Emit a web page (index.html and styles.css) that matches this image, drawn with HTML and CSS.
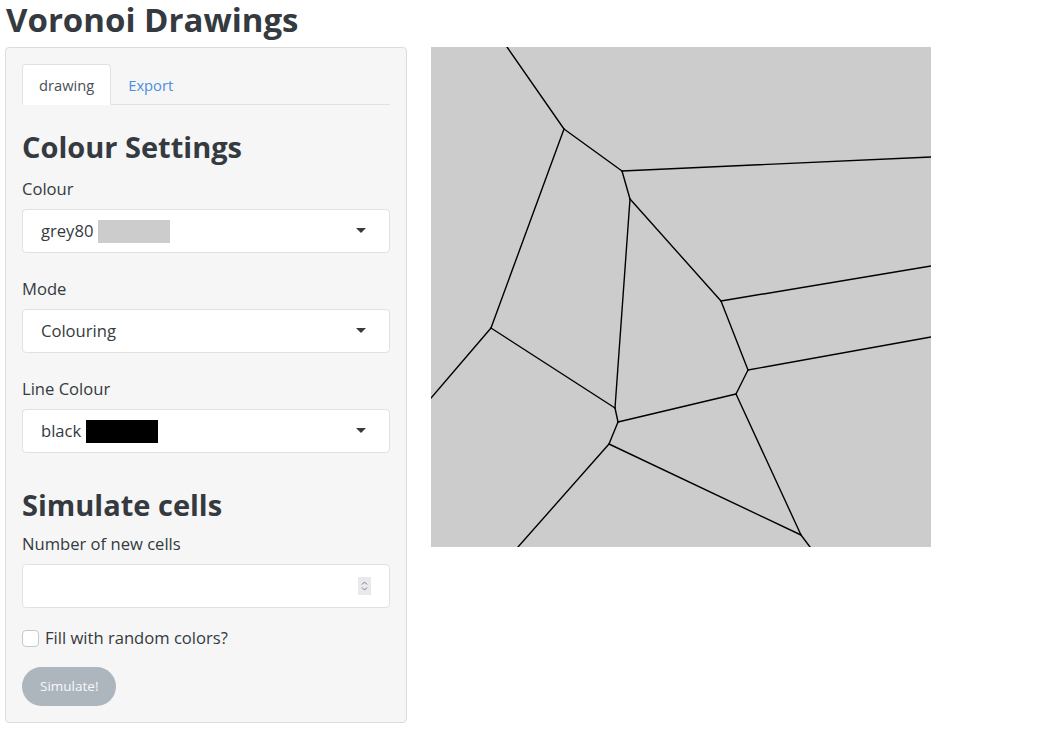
FILE: index.html
```html
<!DOCTYPE html>
<html lang="en">
<head>
<meta charset="utf-8">
<title>Voronoi Drawings</title>
<link rel="stylesheet" href="styles.css">
</head>
<body>
<div class="page">
  <h1 class="title">Voronoi Drawings</h1>
  <div class="row">
    <div class="well">
      <div class="nav">
        <div class="tab active">drawing</div>
        <div class="tab link">Export</div>
      </div>
      <div class="pane">
        <h3 class="heading first">Colour Settings</h3>
        <div class="field">
          <div class="label">Colour</div>
          <div class="select"><span class="value">grey80 <span class="swatch grey"></span></span><span class="caret"></span></div>
        </div>
        <div class="field">
          <div class="label">Mode</div>
          <div class="select"><span class="value">Colouring</span><span class="caret"></span></div>
        </div>
        <div class="field">
          <div class="label">Line Colour</div>
          <div class="select"><span class="value">black <span class="swatch black"></span></span><span class="caret"></span></div>
        </div>
        <h3 class="heading second">Simulate cells</h3>
        <div class="field small">
          <div class="label">Number of new cells</div>
          <div class="input">
            <span class="spinner">
              <svg width="13" height="18" viewBox="0 0 13 18"><path d="M4 7.5 L6.5 5 L9 7.5" fill="none" stroke="#7d7d82" stroke-width="1"/><path d="M4 10.5 L6.5 13 L9 10.5" fill="none" stroke="#7d7d82" stroke-width="1"/></svg>
            </span>
          </div>
        </div>
        <label class="check"><input type="checkbox" class="box"><span>Fill with random colors?</span></label>
        <div class="btn">Simulate!</div>
      </div>
    </div>
    <div class="plot">
      <svg width="500" height="500" viewBox="0 0 500 500">
        <rect width="500" height="500" fill="#cccccc"/>
        <g stroke="#000" stroke-width="1.4" fill="none" stroke-linecap="round">
          <line x1="76" y1="0" x2="133" y2="82"/>
          <line x1="133" y1="82" x2="191" y2="124"/>
          <line x1="191" y1="124" x2="500" y2="110"/>
          <line x1="191" y1="124" x2="199" y2="152"/>
          <line x1="199" y1="152" x2="184" y2="361"/>
          <line x1="199" y1="152" x2="290" y2="254"/>
          <line x1="290" y1="254" x2="500" y2="219"/>
          <line x1="133" y1="82" x2="60" y2="281"/>
          <line x1="60" y1="281" x2="0" y2="351"/>
          <line x1="60" y1="281" x2="184" y2="361"/>
          <line x1="184" y1="361" x2="187" y2="375"/>
          <line x1="187" y1="375" x2="178" y2="397"/>
          <line x1="187" y1="375" x2="305" y2="347"/>
          <line x1="305" y1="347" x2="317" y2="323"/>
          <line x1="317" y1="323" x2="290" y2="254"/>
          <line x1="317" y1="323" x2="500" y2="290"/>
          <line x1="305" y1="347" x2="370" y2="488"/>
          <line x1="370" y1="488" x2="379" y2="500"/>
          <line x1="178" y1="397" x2="370" y2="488"/>
          <line x1="178" y1="397" x2="87" y2="500"/>
        </g>
      </svg>
    </div>
  </div>
</div>
</body>
</html>
```
FILE: styles.css
```css
* { box-sizing: border-box; }
body {
  margin: 0;
  background: #ffffff;
  color: #343a40;
  font-family: "Open Sans", "Noto Sans", sans-serif;
  font-size: 16.6px;
}
.page { padding: 0 5px; }
.title {
  margin: 0 0 7px 1px;
  font-size: 33px;
  line-height: 40px;
  font-weight: 700;
  color: #343a40;
}
.row {
  display: flex;
  align-items: flex-start;
  gap: 24px;
}
.well {
  width: 402px;
  background: #f6f6f6;
  border: 1px solid #dcdcdc;
  border-radius: 4px;
  padding: 16px;
}
.nav {
  display: flex;
  border-bottom: 1px solid #dee2e6;
}
.tab {
  height: 41px;
  margin-bottom: -1px;
  padding: 1px 16px 0;
  line-height: 38px;
  font-size: 14.7px;
  border: 1px solid transparent;
  border-radius: 4px 4px 0 0;
}
.tab.active {
  background: #ffffff;
  border-color: #dee2e6 #dee2e6 #ffffff;
  color: #495057;
}
.tab.link { color: #4a8fde; }
.pane { padding-top: 16px; }
.heading {
  margin: 0;
  font-size: 29px;
  line-height: 34px;
  font-weight: 700;
  color: #343a40;
}
.heading.first { margin-top: 9px; }
.heading.second { margin-top: 35px; }
.field { margin-top: 13px; margin-bottom: 24px; }
.field + .field { margin-top: 0; }
.label {
  line-height: 24px;
  margin-bottom: 8px;
}
.field + .field .label { margin-top: 1px; }
.select, .input {
  height: 44px;
  background: #ffffff;
  border: 1px solid #e1e1e1;
  border-radius: 4px;
  padding: 0 18px;
  display: flex;
  align-items: center;
}
.value {
  line-height: 24px;
  display: flex;
  align-items: center;
  white-space: pre;
}
.swatch {
  display: inline-block;
  width: 72px;
  height: 23px;
}
.swatch.grey { background: #cccccc; }
.swatch.black { background: #000000; }
.caret {
  margin-left: auto;
  margin-right: 5px;
  width: 0;
  height: 0;
  border-left: 5px solid transparent;
  border-right: 5px solid transparent;
  border-top: 5px solid #343a40;
  margin-top: -2px;
}
.input { justify-content: flex-end; }
.spinner {
  display: flex;
  width: 13px;
  height: 18px;
  background: #e9e9ed;
}
.field.small { margin-top: 10px; margin-bottom: 0; }
.check {
  display: flex;
  align-items: center;
  margin-top: 18px;
  line-height: 24px;
  height: 24px;
}
.box {
  appearance: none;
  -webkit-appearance: none;
  width: 17px;
  height: 17px;
  margin: 0 6px 0 0;
  border: 1px solid #c4c8cc;
  border-radius: 4px;
  background: #ffffff;
}
.btn {
  margin-top: 17px;
  display: inline-block;
  height: 39px;
  line-height: 39px;
  padding: 0 18px;
  border-radius: 20px;
  background: #adb5bd;
  color: #f8f9fa;
  font-size: 13.5px;
}
.plot { width: 500px; height: 500px; }
.plot svg { display: block; }
```
